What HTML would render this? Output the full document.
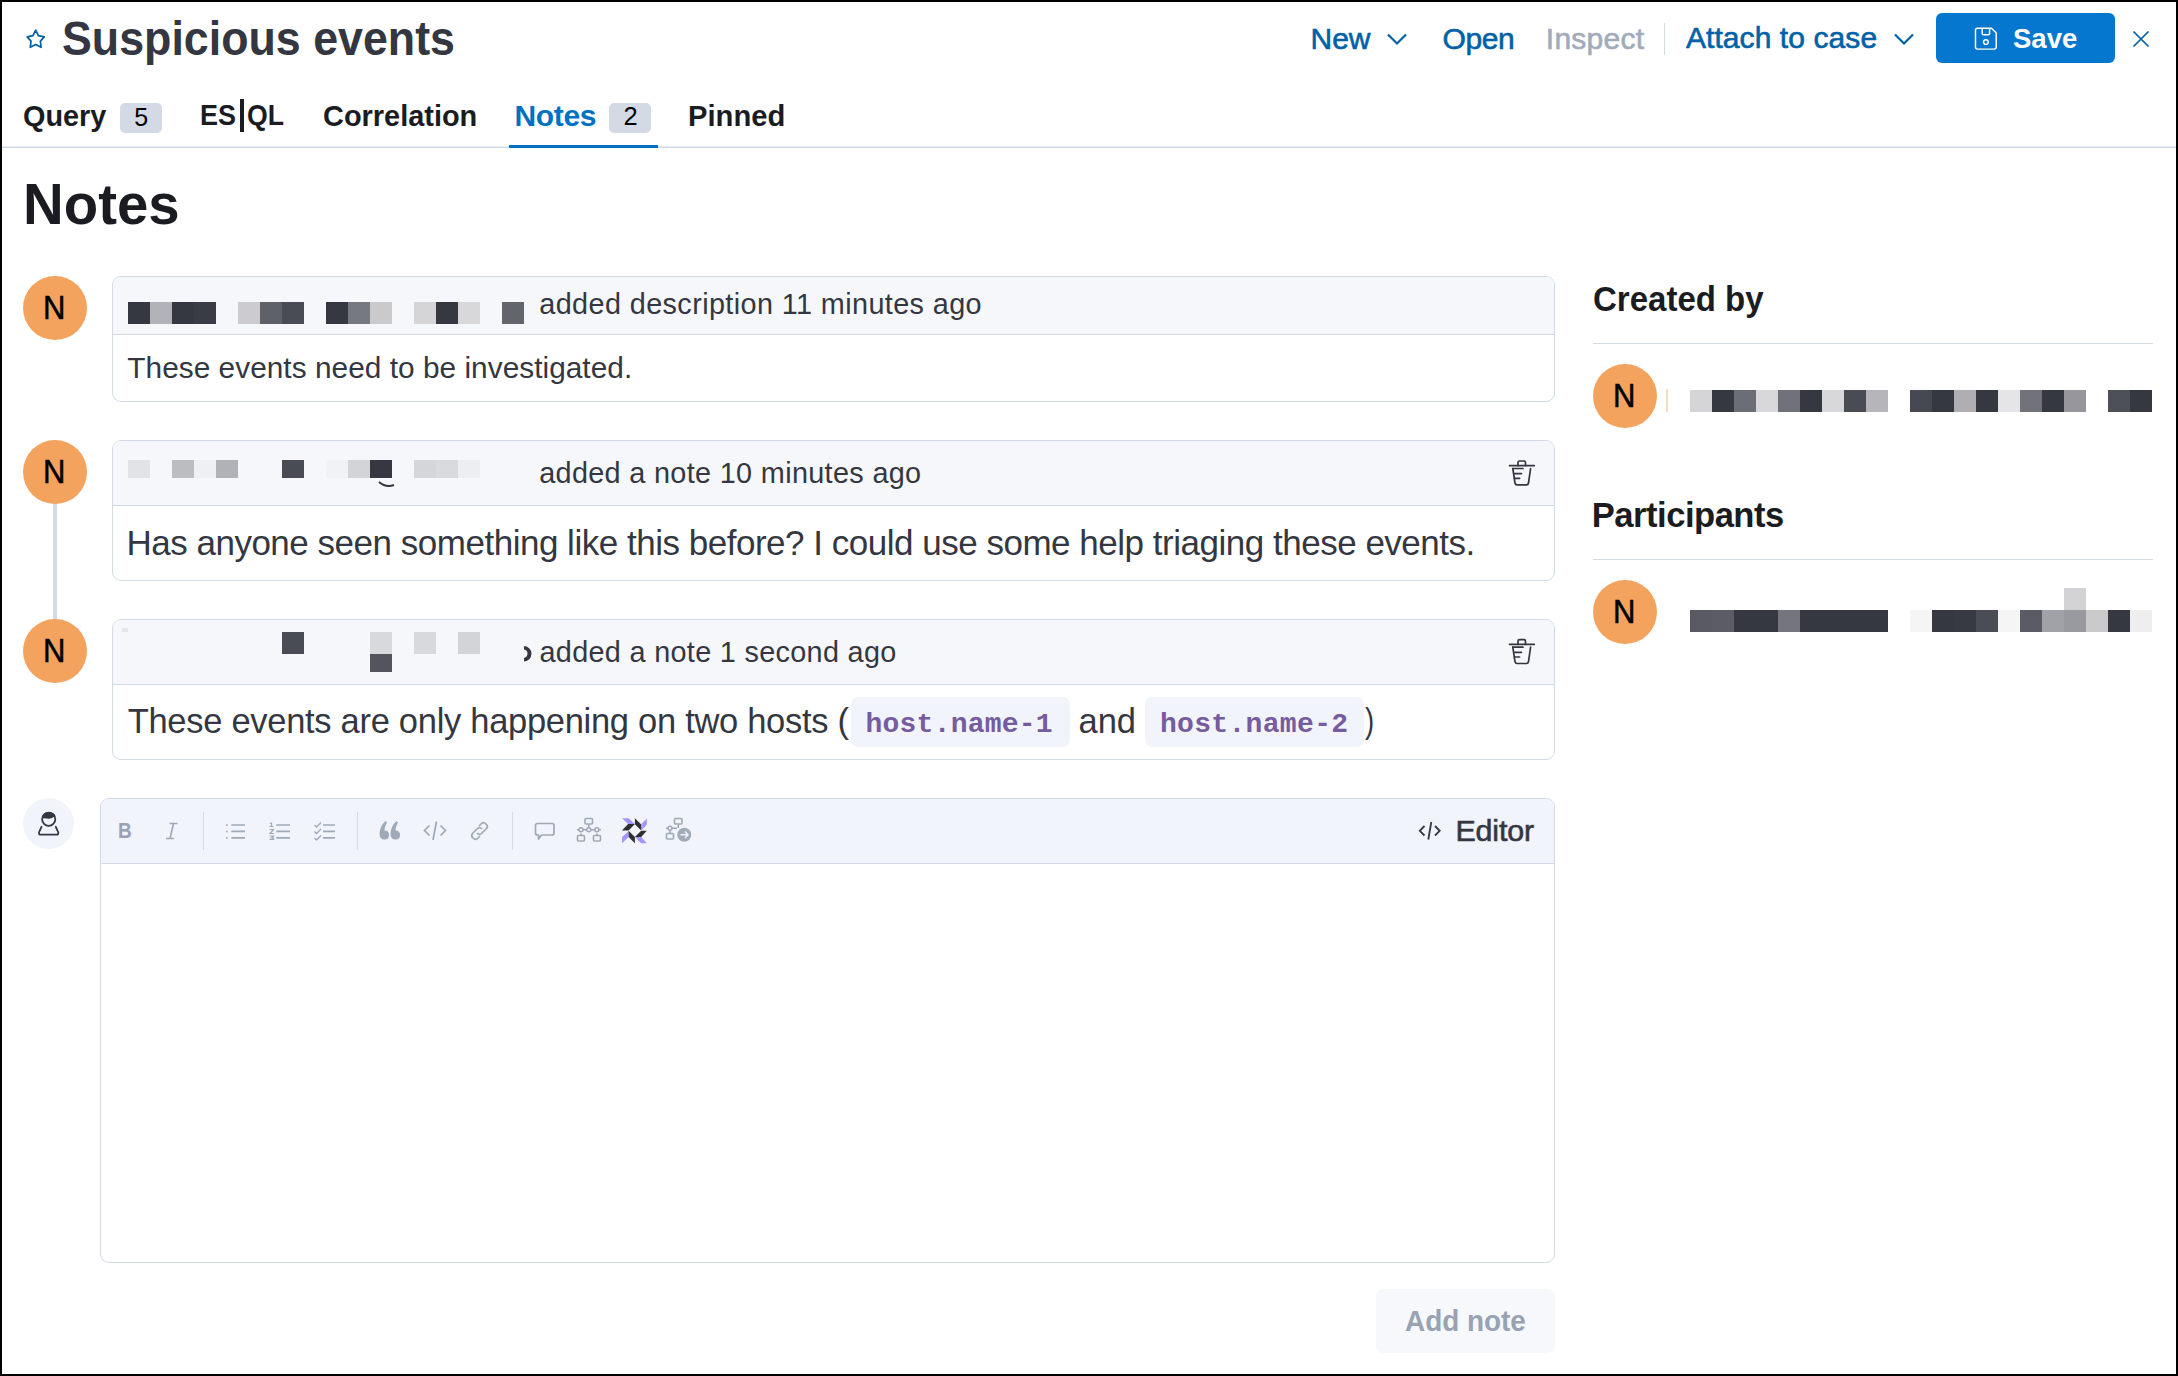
<!DOCTYPE html>
<html><head><meta charset="utf-8">
<style>
html,body{margin:0;padding:0;}
body{width:2178px;height:1376px;position:relative;overflow:hidden;background:#fff;font-family:"Liberation Sans", sans-serif;}
.frame{position:absolute;left:0;top:0;width:2178px;height:1376px;box-sizing:border-box;border:2px solid #000;pointer-events:none;z-index:50;}
.t{position:absolute;white-space:pre;z-index:5;}
.blk{position:absolute;z-index:4;}
.abs{position:absolute;}
.panel{position:absolute;box-sizing:border-box;border:1px solid #d3dae6;border-radius:9px;background:#fff;overflow:hidden;}
.panel .hd{position:absolute;left:0;top:0;right:0;background:#f5f7fa;border-bottom:1px solid #d3dae6;box-sizing:border-box;}
.avatar{position:absolute;width:64px;height:64px;border-radius:50%;background:#f4a35f;}
svg{position:absolute;overflow:visible;}
</style></head><body>
<div class="frame"></div>

<!-- header -->
<svg style="left:0;top:0" width="2178" height="160">
  <path d="M35.7 30.2 L38.4 35.6 L44.2 36.9 L40.4 41.1 L41.1 47.3 L35.7 44.6 L30.3 47.3 L31 41.1 L27.2 36.9 L33 35.6 Z" fill="none" stroke="#0061a6" stroke-width="1.7" stroke-linejoin="round"/>
  <path d="M1388 34.5 L1397 43.5 L1406 34.5" fill="none" stroke="#0061a6" stroke-width="2.2"/>
  <rect x="1664" y="23" width="1" height="32" fill="#d3dae6"/>
  <path d="M1895 34.5 L1904 43.5 L1913 34.5" fill="none" stroke="#0061a6" stroke-width="2.2"/>
  <rect x="1936" y="13" width="179" height="50" rx="6" fill="#0577cf"/>
  <path d="M2133.5 31.5 L2148.5 46.5 M2148.5 31.5 L2133.5 46.5" stroke="#0061a6" stroke-width="1.7"/>
</svg>
<svg style="left:0;top:0;z-index:6" width="2178" height="160">
  <path d="M1977.5 28.3 H1991.5 L1996.2 33 V47.1 Q1996.2 49.1 1994.2 49.1 H1977.5 Q1975.5 49.1 1975.5 47.1 V30.3 Q1975.5 28.3 1977.5 28.3 Z" fill="none" stroke="#fff" stroke-width="1.45" stroke-linejoin="round"/>
  <path d="M1982.2 28.3 V33.4 Q1982.2 34.8 1983.6 34.8 H1988.2 Q1989.6 34.8 1989.6 33.4 V28.3" fill="none" stroke="#fff" stroke-width="1.45"/>
  <circle cx="1985.9" cy="42" r="2.35" fill="none" stroke="#fff" stroke-width="1.45"/>
</svg>

<!-- tabs -->
<div class="abs" style="left:2px;top:146px;width:2174px;height:1px;background:#e6eaf1"></div><div class="abs" style="left:2px;top:147px;width:2174px;height:1px;background:#d3dae6"></div>
<div class="abs" style="left:509px;top:145px;width:149px;height:3px;background:#0071c2"></div>
<div class="abs" style="left:120px;top:103px;width:42px;height:30px;border-radius:5px;background:#d3dae6"></div>
<div class="abs" style="left:609px;top:103px;width:42px;height:30px;border-radius:5px;background:#d3dae6"></div>
<div class="abs" style="left:239.5px;top:99px;width:4px;height:33px;background:#1a1c21"></div>

<!-- timeline -->
<div class="abs" style="left:53px;top:500px;width:4px;height:124px;background:#d3dae6"></div>
<div class="avatar" style="left:23px;top:276px"></div>
<div class="avatar" style="left:23px;top:440px"></div>
<div class="avatar" style="left:23px;top:619px"></div>

<div class="panel" style="left:112px;top:276px;width:1443px;height:126px"><div class="hd" style="height:58px"></div></div>
<div class="panel" style="left:112px;top:440px;width:1443px;height:141px"><div class="hd" style="height:65px"></div></div>
<div class="panel" style="left:112px;top:619px;width:1443px;height:141px"><div class="hd" style="height:65px"></div></div>

<!-- code boxes -->
<div class="abs" style="left:851px;top:697px;width:219px;height:50px;border-radius:7px;background:#f1f4fa;z-index:3"></div>
<div class="abs" style="left:1145px;top:697px;width:219px;height:50px;border-radius:7px;background:#f1f4fa;z-index:3"></div>

<!-- trash icons -->
<svg style="left:0;top:0;z-index:6" width="1600" height="800">
 <g fill="none" stroke="#343741" stroke-width="1.7" stroke-linecap="round" stroke-linejoin="round">
  <g>
  <path d="M1509.5 465.6 H1534.3"/>
  <path d="M1518 465.6 V462.5 Q1518 461 1519.5 461 H1524 Q1525.5 461 1525.5 462.5 V465.6"/>
  <path d="M1512.8 468.5 L1515 483 Q1515.3 484.8 1517 484.8 H1526.5 Q1528.2 484.8 1528.5 483 L1530.6 468.5"/>
  <path d="M1512.8 468.5 H1523 M1513.8 473.6 H1521.5 M1514.4 478.3 H1519.6"/>
  </g>
  <g transform="translate(0,178.7)">
  <path d="M1509.5 465.6 H1534.3"/>
  <path d="M1518 465.6 V462.5 Q1518 461 1519.5 461 H1524 Q1525.5 461 1525.5 462.5 V465.6"/>
  <path d="M1512.8 468.5 L1515 483 Q1515.3 484.8 1517 484.8 H1526.5 Q1528.2 484.8 1528.5 483 L1530.6 468.5"/>
  <path d="M1512.8 468.5 H1523 M1513.8 473.6 H1521.5 M1514.4 478.3 H1519.6"/>
  </g>
 </g>
 <path d="M524 646 Q531 647 531.5 653.5 Q531 661 524 661.5 L524 658 Q527.5 657 527.5 653.5 Q527.5 650 524 649.5 Z" fill="#343741"/>
 <path d="M379 482 Q386 488 394 485" fill="none" stroke="#343741" stroke-width="2.2"/>
</svg>

<!-- side -->
<div class="abs" style="left:1593px;top:343px;width:560px;height:1px;background:#d3dae6"></div>
<div class="abs" style="left:1593px;top:559px;width:560px;height:1px;background:#d3dae6"></div>
<div class="avatar" style="left:1593px;top:364px"></div>
<div class="avatar" style="left:1593px;top:580px"></div>
<div class="abs" style="left:1666px;top:389px;width:1.5px;height:23px;background:#fbd9c0"></div>

<!-- editor -->
<div class="abs" style="left:23px;top:798px;width:51px;height:51px;border-radius:50%;background:#f1f4fa"></div>
<svg style="left:0;top:0;z-index:6" width="1600" height="900">
  <circle cx="48.7" cy="819.2" r="6.6" fill="none" stroke="#343741" stroke-width="1.8"/>
  <path d="M42 818.2 Q42.5 812.2 48.7 812.2 Q54.8 812.2 55.6 816.4 Q53.5 816.8 52 818 Q49.5 819.2 47 818.6 Q44.5 818.1 42 818.2Z" fill="#343741"/>
  <path d="M41.5 826.8 L39 832.5 Q38.8 834.7 40.5 834.7 H56.8 Q58.5 834.7 58.3 832.5 L55.8 826.8" fill="none" stroke="#343741" stroke-width="1.8" stroke-linecap="round"/>
</svg>
<div class="panel" style="left:100px;top:798px;width:1455px;height:465px;border-radius:9px"><div class="hd" style="height:65px;background:#f1f4fa"></div></div>

<svg style="left:0;top:0;z-index:6" width="1600" height="900">
 <g fill="none" stroke="#a0a9b8" stroke-width="1.6">
  <!-- italic -->
  <path d="M169.5 823.5 H177.5 M166 838.5 H174 M173.5 823.5 L170 838.5"/>
  <!-- bullet list -->
  <path d="M231.3 825 H245 M231.3 831.4 H245 M231.3 837.9 H245" stroke-width="1.6"/>
  <!-- numbered -->
  <path d="M276.3 825 H290 M276.3 831.4 H290 M276.3 837.9 H290" stroke-width="1.6"/>
  <path d="M270 823.5 L271.5 823 V826.5 M269.5 826.5 H273.5 M269.5 829.5 H273.5 L270 833.5 H274 M269.5 836 H273.5 L271.5 838 H273.5 V839.5 H269.5" stroke-width="1.2"/>
  <!-- checklist -->
  <path d="M323 825 H335 M323 831.4 H335 M323 837.9 H335" stroke-width="1.6"/>
  <path d="M314.5 825 L316.5 827 L321 822.5 M314.5 831.4 L316.5 833.4 L321 828.9 M314.5 837.9 L316.5 839.9 L321 835.4" stroke-width="1.4"/>
  <!-- code -->
  <path d="M429.5 825.5 L424.5 830.5 L429.5 835.5 M440.5 825.5 L445.5 830.5 L440.5 835.5 M436.5 821.5 L433 840" stroke-width="1.7"/>
  <!-- link -->
  <path d="M479 826 L481.5 823.5 Q483.5 821.5 486 824 Q488.5 826.5 486.5 828.5 L481.5 833.5 Q479.5 835.5 477 833 M480 836 L477.5 838.5 Q475.5 840.5 473 838 Q470.5 835.5 472.5 833.5 L477.5 828.5 Q479.5 826.5 482 829" stroke-width="1.7"/>
  <!-- comment -->
  <path d="M537.5 823.5 H552 Q554 823.5 554 825.5 V833 Q554 835 552 835 H541.5 L538.5 839 V835 H537.5 Q535.5 835 535.5 833 V825.5 Q535.5 823.5 537.5 823.5Z" stroke-width="1.7" stroke-linejoin="round"/>
  <!-- tree -->
  <rect x="585" y="818.5" width="7.5" height="5.5" rx="1" stroke-width="1.6"/>
  <path d="M588.8 824 V829.8 M577 829.8 H601" stroke-width="1.6"/>
  <circle cx="581" cy="829.8" r="2" fill="#f1f4fa" stroke-width="1.5"/>
  <circle cx="588.8" cy="829.8" r="2" fill="#f1f4fa" stroke-width="1.5"/>
  <circle cx="596.8" cy="829.8" r="2" fill="#f1f4fa" stroke-width="1.5"/>
  <rect x="577.5" y="835.5" width="7" height="5.5" rx="1" stroke-width="1.6"/>
  <rect x="593.5" y="835.5" width="7" height="5.5" rx="1" stroke-width="1.6"/>
  <path d="M581 833.5 V835.5 M597 833.5 V835.5" stroke-width="1.6"/>
  <!-- timeline arrow -->
  <rect x="674.5" y="818.5" width="7.5" height="5.5" rx="1" stroke-width="1.6"/>
  <path d="M678.3 824 V828 M666 828.3 H677" stroke-width="1.6"/>
  <circle cx="670" cy="828.3" r="2" fill="#f1f4fa" stroke-width="1.5"/>
  <rect x="666.5" y="833.5" width="7" height="5.5" rx="1" stroke-width="1.6"/>
  <path d="M670 831 V833.5" stroke-width="1.6"/>
 </g>
 <!-- quote -->
 <path d="M385.5 821 Q380 826 379.5 833.5 Q379.5 839.5 384.5 839.5 Q389 839.5 389 835 Q389 830.5 384.5 830.5 Q384.5 826.5 387 822.5 Z M396.5 821 Q391 826 390.5 833.5 Q390.5 839.5 395.5 839.5 Q400 839.5 400 835 Q400 830.5 395.5 830.5 Q395.5 826.5 398 822.5 Z" fill="#a0a9b8"/>
 <!-- bullets dots -->
 <g fill="#a0a9b8"><rect x="226" y="824.3" width="1.6" height="1.6"/><rect x="226" y="830.7" width="1.6" height="1.6"/><rect x="226" y="837.2" width="1.6" height="1.6"/></g>
 <!-- arrow circle -->
 <circle cx="684.3" cy="834.7" r="7" fill="#a2abba"/>
 <path d="M680.5 834.7 H688 M685 831.5 L688 834.7 L685 837.9" fill="none" stroke="#f1f4fa" stroke-width="1.5"/>
 <!-- lens logo -->
 <g>
  <path d="M622.1 818.2 L628.6 818.2 L634.9 824 L628.1 824Z M641.2 824.3 L646.8 818.6 L646.8 824.8 L641.2 830.4Z M634.9 836.9 L641.2 836.9 L646.8 843.2 L641.2 843.2Z M628.5 831.2 L628.5 837.1 L622.1 843.2 L622.1 837.1Z" fill="#a494fd"/>
  <path d="M628.1 824 L634.9 824 L628.6 830.6 L621.9 830.6Z M634.9 818.3 L641 824.3 L641.2 830.4 L634.9 824.3Z M641.2 830.8 L646.8 830.8 L641.2 836.9 L634.9 836.9Z M628.6 830.8 L634.9 837.1 L634.9 843.2 L628.6 837.1Z" fill="#2f2f2f"/>
 </g>
 <!-- separators -->
 <g fill="#d3dae6"><rect x="203" y="812" width="1" height="38"/><rect x="357" y="812" width="1" height="38"/><rect x="512" y="812" width="1" height="38"/></g>
 <!-- editor code icon -->
 <path d="M1424.5 826 L1419.8 830.8 L1424.5 835.5 M1435 826 L1439.7 830.8 L1435 835.5 M1431.3 822 L1428.3 839.5" fill="none" stroke="#343741" stroke-width="1.8"/>
</svg>

<div class="abs" style="left:1376px;top:1289px;width:179px;height:64px;border-radius:8px;background:#f7f8fb"></div>

<div class="blk" style="left:128px;top:302px;width:22px;height:22px;background:#363841"></div>
<div class="blk" style="left:150px;top:302px;width:22px;height:22px;background:#b2b2b9"></div>
<div class="blk" style="left:172px;top:302px;width:22px;height:22px;background:#363841"></div>
<div class="blk" style="left:194px;top:302px;width:22px;height:22px;background:#3a3c45"></div>
<div class="blk" style="left:238px;top:302px;width:22px;height:22px;background:#cbcbd0"></div>
<div class="blk" style="left:260px;top:302px;width:22px;height:22px;background:#5f6169"></div>
<div class="blk" style="left:282px;top:302px;width:22px;height:22px;background:#4a4c55"></div>
<div class="blk" style="left:326px;top:302px;width:22px;height:22px;background:#363841"></div>
<div class="blk" style="left:348px;top:302px;width:22px;height:22px;background:#777980"></div>
<div class="blk" style="left:370px;top:302px;width:22px;height:22px;background:#cacacd"></div>
<div class="blk" style="left:414px;top:302px;width:22px;height:22px;background:#d5d5d8"></div>
<div class="blk" style="left:436px;top:302px;width:22px;height:22px;background:#363841"></div>
<div class="blk" style="left:458px;top:302px;width:22px;height:22px;background:#d8d8db"></div>
<div class="blk" style="left:502px;top:302px;width:22px;height:22px;background:#63656d"></div>
<div class="blk" style="left:128px;top:460px;width:22px;height:18px;background:#e2e3e6"></div>
<div class="blk" style="left:172px;top:460px;width:22px;height:18px;background:#bcbdc1"></div>
<div class="blk" style="left:194px;top:460px;width:22px;height:18px;background:#eff0f3"></div>
<div class="blk" style="left:216px;top:460px;width:22px;height:18px;background:#b1b2b7"></div>
<div class="blk" style="left:282px;top:460px;width:22px;height:18px;background:#4a4c55"></div>
<div class="blk" style="left:326px;top:460px;width:22px;height:18px;background:#f1f2f5"></div>
<div class="blk" style="left:348px;top:460px;width:22px;height:18px;background:#d3d4d8"></div>
<div class="blk" style="left:370px;top:460px;width:22px;height:18px;background:#363841"></div>
<div class="blk" style="left:414px;top:460px;width:22px;height:18px;background:#d5d6d9"></div>
<div class="blk" style="left:436px;top:460px;width:22px;height:18px;background:#d9dadd"></div>
<div class="blk" style="left:458px;top:460px;width:22px;height:18px;background:#eceef1"></div>
<div class="blk" style="left:282px;top:632px;width:22px;height:22px;background:#4a4c55"></div>
<div class="blk" style="left:370px;top:632px;width:22px;height:22px;background:#d8d9dc"></div>
<div class="blk" style="left:414px;top:632px;width:22px;height:22px;background:#d8d9dc"></div>
<div class="blk" style="left:458px;top:632px;width:22px;height:22px;background:#d3d4d8"></div>
<div class="blk" style="left:122px;top:628px;width:6px;height:4px;background:#e3e7ee"></div>
<div class="blk" style="left:370px;top:654px;width:22px;height:18px;background:#53555e"></div>
<div class="blk" style="left:1690px;top:390px;width:22px;height:22px;background:#d5d5d8"></div>
<div class="blk" style="left:1712px;top:390px;width:22px;height:22px;background:#363841"></div>
<div class="blk" style="left:1734px;top:390px;width:22px;height:22px;background:#6b6e76"></div>
<div class="blk" style="left:1756px;top:390px;width:22px;height:22px;background:#d8d8db"></div>
<div class="blk" style="left:1778px;top:390px;width:22px;height:22px;background:#71717b"></div>
<div class="blk" style="left:1800px;top:390px;width:22px;height:22px;background:#363841"></div>
<div class="blk" style="left:1822px;top:390px;width:22px;height:22px;background:#d8d8db"></div>
<div class="blk" style="left:1844px;top:390px;width:22px;height:22px;background:#4a4c55"></div>
<div class="blk" style="left:1866px;top:390px;width:22px;height:22px;background:#b5b5ba"></div>
<div class="blk" style="left:1910px;top:390px;width:22px;height:22px;background:#464852"></div>
<div class="blk" style="left:1932px;top:390px;width:22px;height:22px;background:#363841"></div>
<div class="blk" style="left:1954px;top:390px;width:22px;height:22px;background:#b0aeb3"></div>
<div class="blk" style="left:1976px;top:390px;width:22px;height:22px;background:#363841"></div>
<div class="blk" style="left:1998px;top:390px;width:22px;height:22px;background:#e5e5e7"></div>
<div class="blk" style="left:2020px;top:390px;width:22px;height:22px;background:#72727c"></div>
<div class="blk" style="left:2042px;top:390px;width:22px;height:22px;background:#363841"></div>
<div class="blk" style="left:2064px;top:390px;width:22px;height:22px;background:#96969c"></div>
<div class="blk" style="left:2108px;top:390px;width:22px;height:22px;background:#4e5058"></div>
<div class="blk" style="left:2130px;top:390px;width:22px;height:22px;background:#363841"></div>
<div class="blk" style="left:1690px;top:610px;width:22px;height:22px;background:#595a63"></div>
<div class="blk" style="left:1712px;top:610px;width:22px;height:22px;background:#5b5c65"></div>
<div class="blk" style="left:1734px;top:610px;width:22px;height:22px;background:#363841"></div>
<div class="blk" style="left:1756px;top:610px;width:22px;height:22px;background:#363841"></div>
<div class="blk" style="left:1778px;top:610px;width:22px;height:22px;background:#75757d"></div>
<div class="blk" style="left:1800px;top:610px;width:22px;height:22px;background:#363841"></div>
<div class="blk" style="left:1822px;top:610px;width:22px;height:22px;background:#363841"></div>
<div class="blk" style="left:1844px;top:610px;width:22px;height:22px;background:#363841"></div>
<div class="blk" style="left:1866px;top:610px;width:22px;height:22px;background:#363841"></div>
<div class="blk" style="left:1910px;top:610px;width:22px;height:22px;background:#f5f5f6"></div>
<div class="blk" style="left:1932px;top:610px;width:22px;height:22px;background:#363841"></div>
<div class="blk" style="left:1954px;top:610px;width:22px;height:22px;background:#383a43"></div>
<div class="blk" style="left:1976px;top:610px;width:22px;height:22px;background:#4b4d56"></div>
<div class="blk" style="left:1998px;top:610px;width:22px;height:22px;background:#f5f5f6"></div>
<div class="blk" style="left:2020px;top:610px;width:22px;height:22px;background:#5a5b64"></div>
<div class="blk" style="left:2042px;top:610px;width:22px;height:22px;background:#a1a2a8"></div>
<div class="blk" style="left:2064px;top:610px;width:22px;height:22px;background:#999aa0"></div>
<div class="blk" style="left:2086px;top:610px;width:22px;height:22px;background:#cacacd"></div>
<div class="blk" style="left:2108px;top:610px;width:22px;height:22px;background:#363841"></div>
<div class="blk" style="left:2130px;top:610px;width:22px;height:22px;background:#eeeeef"></div>
<div class="blk" style="left:2064px;top:588px;width:22px;height:22px;background:#d3d3d5"></div>
<div id="title" class="t" style="left:62.08px;top:13.89px;font-size:48.8px;line-height:48.8px;font-weight:700;color:#343741;letter-spacing:0.000px;font-family:'Liberation Sans', sans-serif;transform:scaleX(0.9171);transform-origin:0 0;">Suspicious events</div>
<div id="new" class="t" style="left:1310.60px;top:23.61px;font-size:30px;line-height:30px;font-weight:400;color:#0061a6;letter-spacing:-0.125px;font-family:'Liberation Sans', sans-serif;-webkit-text-stroke:0.6px currentColor;">New</div>
<div id="open" class="t" style="left:1442.50px;top:23.61px;font-size:30px;line-height:30px;font-weight:400;color:#0061a6;letter-spacing:-0.401px;font-family:'Liberation Sans', sans-serif;-webkit-text-stroke:0.6px currentColor;">Open</div>
<div id="inspect" class="t" style="left:1545.80px;top:23.61px;font-size:30px;line-height:30px;font-weight:400;color:#a2abba;letter-spacing:0.252px;font-family:'Liberation Sans', sans-serif;-webkit-text-stroke:0.6px currentColor;">Inspect</div>
<div id="attach" class="t" style="left:1685.90px;top:23.21px;font-size:30px;line-height:30px;font-weight:400;color:#0061a6;letter-spacing:0.083px;font-family:'Liberation Sans', sans-serif;-webkit-text-stroke:0.6px currentColor;">Attach to case</div>
<div id="save" class="t" style="left:2012.90px;top:24.47px;font-size:28.5px;line-height:28.5px;font-weight:700;color:#fff;letter-spacing:0.000px;font-family:'Liberation Sans', sans-serif;transform:scaleX(0.9648);transform-origin:0 0;">Save</div>
<div id="tq" class="t" style="left:22.54px;top:100.61px;font-size:30px;line-height:30px;font-weight:700;color:#1a1c21;letter-spacing:0.000px;font-family:'Liberation Sans', sans-serif;transform:scaleX(0.9614);transform-origin:0 0;">Query</div>
<div id="b5" class="t" style="left:134.20px;top:104.54px;font-size:25px;line-height:25px;font-weight:400;color:#000;letter-spacing:0.000px;font-family:'Liberation Sans', sans-serif;">5</div>
<div id="tes" class="t" style="left:200.30px;top:100.31px;font-size:30px;line-height:30px;font-weight:700;color:#1a1c21;letter-spacing:0.000px;font-family:'Liberation Sans', sans-serif;transform:scaleX(0.8998);transform-origin:0 0;">ES</div>
<div id="tql" class="t" style="left:247.11px;top:100.31px;font-size:30px;line-height:30px;font-weight:700;color:#1a1c21;letter-spacing:0.000px;font-family:'Liberation Sans', sans-serif;transform:scaleX(0.8876);transform-origin:0 0;">QL</div>
<div id="tcor" class="t" style="left:323.04px;top:100.61px;font-size:30px;line-height:30px;font-weight:700;color:#1a1c21;letter-spacing:0.000px;font-family:'Liberation Sans', sans-serif;transform:scaleX(0.9639);transform-origin:0 0;">Correlation</div>
<div id="tnotes" class="t" style="left:514.50px;top:100.61px;font-size:30px;line-height:30px;font-weight:700;color:#0071c2;letter-spacing:-0.366px;font-family:'Liberation Sans', sans-serif;">Notes</div>
<div id="b2" class="t" style="left:623.50px;top:104.31px;font-size:25.5px;line-height:25.5px;font-weight:400;color:#000;letter-spacing:0.000px;font-family:'Liberation Sans', sans-serif;">2</div>
<div id="tpin" class="t" style="left:688.26px;top:100.61px;font-size:30px;line-height:30px;font-weight:700;color:#1a1c21;letter-spacing:0.000px;font-family:'Liberation Sans', sans-serif;transform:scaleX(0.9723);transform-origin:0 0;">Pinned</div>
<div id="h1" class="t" style="left:22.98px;top:174.90px;font-size:58px;line-height:58px;font-weight:700;color:#1a1c21;letter-spacing:0.000px;font-family:'Liberation Sans', sans-serif;transform:scaleX(0.9719);transform-origin:0 0;">Notes</div>
<div id="n1h" class="t" style="left:539.30px;top:290.32px;font-size:28.8px;line-height:28.8px;font-weight:400;color:#343741;letter-spacing:0.394px;font-family:'Liberation Sans', sans-serif;">added description 11 minutes ago</div>
<div id="n1b" class="t" style="left:127.30px;top:352.57px;font-size:29.8px;line-height:29.8px;font-weight:400;color:#343741;letter-spacing:0.036px;font-family:'Liberation Sans', sans-serif;">These events need to be investigated.</div>
<div id="n2h" class="t" style="left:539.20px;top:458.62px;font-size:28.8px;line-height:28.8px;font-weight:400;color:#343741;letter-spacing:0.341px;font-family:'Liberation Sans', sans-serif;">added a note 10 minutes ago</div>
<div id="n2b" class="t" style="left:126.40px;top:524.67px;font-size:35px;line-height:35px;font-weight:400;color:#343741;letter-spacing:-0.485px;font-family:'Liberation Sans', sans-serif;">Has anyone seen something like this before? I could use some help triaging these events.</div>
<div id="n3h" class="t" style="left:539.50px;top:637.52px;font-size:28.8px;line-height:28.8px;font-weight:400;color:#343741;letter-spacing:0.323px;font-family:'Liberation Sans', sans-serif;">added a note 1 second ago</div>
<div id="n3b1" class="t" style="left:127.70px;top:703.80px;font-size:34.5px;line-height:34.5px;font-weight:400;color:#343741;letter-spacing:-0.294px;font-family:'Liberation Sans', sans-serif;">These events are only happening on two hosts (</div>
<div id="n3c1" class="t" style="left:865.60px;top:711.15px;font-size:28px;line-height:28px;font-weight:700;color:#765b9e;letter-spacing:0.207px;font-family:'Liberation Mono', monospace;">host.name-1</div>
<div id="n3and" class="t" style="left:1078.60px;top:703.80px;font-size:34.5px;line-height:34.5px;font-weight:400;color:#343741;letter-spacing:-0.137px;font-family:'Liberation Sans', sans-serif;">and</div>
<div id="n3c2" class="t" style="left:1159.90px;top:711.15px;font-size:28px;line-height:28px;font-weight:700;color:#765b9e;letter-spacing:0.337px;font-family:'Liberation Mono', monospace;">host.name-2</div>
<div id="n3p" class="t" style="left:1364.60px;top:703.80px;font-size:34.5px;line-height:34.5px;font-weight:400;color:#343741;letter-spacing:0.000px;font-family:'Liberation Sans', sans-serif;transform:scaleX(0.8000);transform-origin:0 0;">)</div>
<div id="cby" class="t" style="left:1592.85px;top:282.41px;font-size:34.6px;line-height:34.6px;font-weight:700;color:#1a1c21;letter-spacing:0.000px;font-family:'Liberation Sans', sans-serif;transform:scaleX(0.9547);transform-origin:0 0;">Created by</div>
<div id="part" class="t" style="left:1591.80px;top:497.71px;font-size:34.6px;line-height:34.6px;font-weight:700;color:#1a1c21;letter-spacing:-0.500px;font-family:'Liberation Sans', sans-serif;">Participants</div>
<div id="editor" class="t" style="left:1455.40px;top:815.47px;font-size:30.4px;line-height:30.4px;font-weight:400;color:#343741;letter-spacing:-0.134px;font-family:'Liberation Sans', sans-serif;-webkit-text-stroke:0.6px currentColor;">Editor</div>
<div id="addnote" class="t" style="left:1405.00px;top:1305.51px;font-size:30px;line-height:30px;font-weight:700;color:#98a2b3;letter-spacing:0.000px;font-family:'Liberation Sans', sans-serif;transform:scaleX(0.9297);transform-origin:0 0;">Add note</div>
<div id="bold" class="t" style="left:118.15px;top:820.15px;font-size:22.5px;line-height:22.5px;font-weight:700;color:#98a2b3;letter-spacing:0.000px;font-family:'Liberation Sans', sans-serif;transform:scaleX(0.8467);transform-origin:0 0;">B</div>
<div id="av0" class="t" style="left:43.42px;top:291.17px;font-size:33px;line-height:33px;font-weight:400;color:#000;letter-spacing:0.000px;font-family:'Liberation Sans', sans-serif;-webkit-text-stroke:0.5px currentColor;transform:scaleX(0.9400);transform-origin:0 0;">N</div>
<div id="av1" class="t" style="left:43.42px;top:455.17px;font-size:33px;line-height:33px;font-weight:400;color:#000;letter-spacing:0.000px;font-family:'Liberation Sans', sans-serif;-webkit-text-stroke:0.5px currentColor;transform:scaleX(0.9400);transform-origin:0 0;">N</div>
<div id="av2" class="t" style="left:43.42px;top:634.17px;font-size:33px;line-height:33px;font-weight:400;color:#000;letter-spacing:0.000px;font-family:'Liberation Sans', sans-serif;-webkit-text-stroke:0.5px currentColor;transform:scaleX(0.9400);transform-origin:0 0;">N</div>
<div id="sav0" class="t" style="left:1613.42px;top:379.17px;font-size:33px;line-height:33px;font-weight:400;color:#000;letter-spacing:0.000px;font-family:'Liberation Sans', sans-serif;-webkit-text-stroke:0.5px currentColor;transform:scaleX(0.9400);transform-origin:0 0;">N</div>
<div id="sav1" class="t" style="left:1613.42px;top:595.17px;font-size:33px;line-height:33px;font-weight:400;color:#000;letter-spacing:0.000px;font-family:'Liberation Sans', sans-serif;-webkit-text-stroke:0.5px currentColor;transform:scaleX(0.9400);transform-origin:0 0;">N</div>
</body></html>
